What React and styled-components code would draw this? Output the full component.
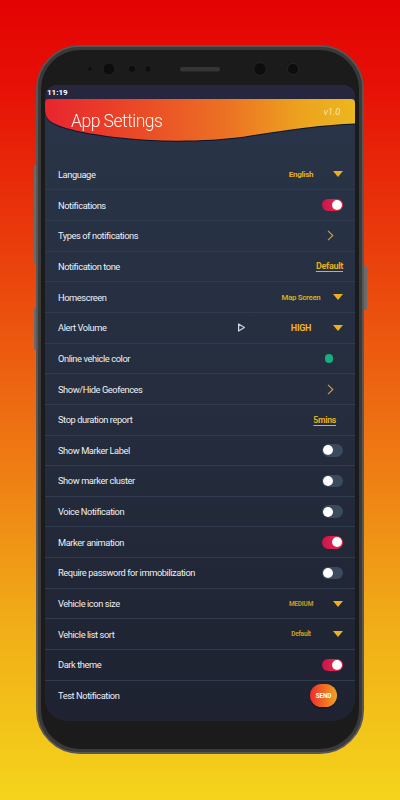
import React from "react";
import styled, { createGlobalStyle } from "styled-components";

const Global = createGlobalStyle`
  html, body { margin: 0; padding: 0; }
  body { font-family: Roboto, "Liberation Sans", sans-serif; }
  * { box-sizing: border-box; }
`;

const Page = styled.div`
  width: 400px;
  height: 800px;
  padding-top: 45px;
  display: flex;
  justify-content: center;
  background: linear-gradient(180deg, #e40303 0%, #e60f06 10%, #ed6411 48%, #f1ad18 78%, #f4d41b 100%);
`;

const Phone = styled.div`
  position: relative;
  width: 328px;
  height: 709px;
  border: 2px solid #575757;
  border-radius: 44px;
  background: #1b1b1b;
  box-shadow: inset 0 0 0 3px #3a3a3a;
  padding: 0 7px;
  display: flex;
  flex-direction: column;
`;

const SideButton = styled.div`
  position: absolute;
  width: 2.5px;
  top: ${(p) => p.$top}px;
  height: ${(p) => p.$h}px;
  ${(p) => (p.$right ? "right: -4.5px;" : "left: -4.5px;")}
  background: #6a6a6a;
  border-radius: 1px;
`;

const TopBezel = styled.div`
  height: 38px;
  flex-shrink: 0;
  display: flex;
  align-items: flex-start;
`;

const Screen = styled.div`
  height: 636px;
  flex-shrink: 0;
  border-radius: 12px 12px 22px 22px;
  overflow: hidden;
  background: linear-gradient(180deg, #293549 0%, #252d3e 50%, #1e2231 100%);
  display: flex;
  flex-direction: column;
`;

const StatusBar = styled.div`
  height: 14px;
  flex-shrink: 0;
  background: #27263f;
  color: #ffffff;
  font-weight: 700;
  font-size: 8px;
  padding-left: 2px;
  display: flex;
  align-items: center;
`;

const HeaderArea = styled.div`
  height: 59.6px;
  flex-shrink: 0;
  filter: drop-shadow(0 1.2px 0.4px rgba(6, 18, 48, 0.95));
`;

const Wave = styled.div`
  height: 44px;
  background: linear-gradient(90deg, #e8252d 0%, #ea4a27 30%, #ec7423 60%, #eca21f 82%, #ecb71e 100%);
  clip-path: path("M0,4 Q0,0 4,0 L306,0 Q310,0 310,4 L310,24.5 C280,25.5 240,31 200,37.5 C160,43 110,43 70,38 C35,33.5 10,28 3,20 Q0,16 0,10 Z");
  display: flex;
  justify-content: space-between;
  align-items: flex-start;
  padding: 0 15px 0 26px;
`;

const Title = styled.div`
  margin-top: 13.5px;
  font-family: Roboto, "Liberation Sans", sans-serif;
  font-weight: 300;
  font-size: 17.5px;
  line-height: 1;
  letter-spacing: -0.5px;
  color: #fff4ee;
`;

const Version = styled.div`
  margin-top: 8px;
  font-style: italic;
  font-size: 9.5px;
  line-height: 1;
  color: #f7e6a4;
  letter-spacing: -0.2px;
`;

const List = styled.div`
  display: flex;
  flex-direction: column;
`;

const Row = styled.div`
  height: 30.67px;
  display: flex;
  align-items: center;
  padding: 0 12px 0 13px;
  border-top: 1px solid ${(p) => (p.$first ? "transparent" : "#303b4e")};
`;

const Label = styled.div`
  flex: 1;
  font-size: 9.3px;
  font-weight: 400;
  letter-spacing: -0.42px;
  color: #eef0f3;
  white-space: nowrap;
`;

const ValueBox = styled.div`
  width: 50px;
  text-align: center;
  font-weight: 700;
  font-size: ${(p) => p.$size}px;
  letter-spacing: ${(p) => (p.$size < 7 ? -0.2 : -0.3)}px;
  color: ${(p) => p.$color};
`;

const Caret = styled.svg`
  margin-left: 7px;
  display: block;
`;

const PlayIcon = styled.svg`
  display: block;
  margin-right: 30px;
`;

const Chevron = styled.svg`
  display: block;
  margin-right: 9px;
`;

const Dot = styled.div`
  width: 8.5px;
  height: 8.5px;
  border-radius: 50%;
  background: #18ae7d;
  margin-right: 10px;
`;

const LinkValue = styled.div`
  font-weight: 700;
  font-size: ${(p) => p.$size}px;
  letter-spacing: -0.3px;
  color: #e7ae1d;
  text-decoration: underline;
  text-underline-offset: 1.5px;
  margin-right: ${(p) => p.$mr}px;
`;

const Track = styled.div`
  width: 21px;
  height: 12.5px;
  border-radius: 6.5px;
  padding: 1.2px;
  display: flex;
  justify-content: ${(p) => (p.$on ? "flex-end" : "flex-start")};
  align-items: center;
  background: ${(p) => (p.$on ? "linear-gradient(90deg, #c81550, #ef2c46)" : "#3c4a5d")};
`;

const Knob = styled.div`
  width: 10px;
  height: 10px;
  border-radius: 50%;
  background: #ffffff;
  box-shadow: 0 0 0.5px rgba(0, 0, 0, 0.4);
`;

const SendButton = styled.button`
  width: 27px;
  height: 23px;
  border: none;
  border-radius: 12px;
  padding: 0;
  margin-right: 6px;
  background: linear-gradient(90deg, #ee2a2b 0%, #f06a23 50%, #eea41f 100%);
  color: #ffffff;
  font-family: Roboto, "Liberation Sans", sans-serif;
  font-weight: 700;
  font-size: 6.3px;
  letter-spacing: -0.1px;
  box-shadow: 0 1px 2px rgba(0, 0, 0, 0.4);
`;

const Chin = styled.div`
  flex: 1;
`;

function Toggle({ on }) {
  return (
    <Track $on={on}>
      <Knob />
    </Track>
  );
}

function Dropdown({ value, size, color }) {
  return (
    <>
      <ValueBox $size={size} $color={color}>{value}</ValueBox>
      <Caret width="10" height="6" viewBox="0 0 10 6">
        <polygon points="0,0 10,0 5,6" fill="#ebb11b" />
      </Caret>
    </>
  );
}

function Arrow() {
  return (
    <Chevron width="7" height="11" viewBox="0 0 7 11">
      <polyline points="1,0.8 5.8,5.5 1,10.2" fill="none" stroke="#cfa23d" strokeWidth="1.1" />
    </Chevron>
  );
}

const rows = [
  { label: "Language", kind: "dd", value: "English", size: 8, color: "#e8ae1c" },
  { label: "Notifications", kind: "toggle", on: true },
  { label: "Types of notifications", kind: "chev" },
  { label: "Notification tone", kind: "link", value: "Default", size: 9, mr: 0 },
  { label: "Homescreen", kind: "dd", value: "Map Screen", size: 7.8, color: "#d9a41f" },
  { label: "Alert Volume", kind: "dd", play: true, value: "HIGH", size: 9, color: "#efb31d" },
  { label: "Online vehicle color", kind: "dot" },
  { label: "Show/Hide Geofences", kind: "chev" },
  { label: "Stop duration report", kind: "link", value: "5mins", size: 8.7, mr: 7 },
  { label: "Show Marker Label", kind: "toggle", on: false },
  { label: "Show marker cluster", kind: "toggle", on: false },
  { label: "Voice Notification", kind: "toggle", on: false },
  { label: "Marker animation", kind: "toggle", on: true },
  { label: "Require password for immobilization", kind: "toggle", on: false },
  { label: "Vehicle icon size", kind: "dd", value: "MEDIUM", size: 6.5, color: "#c9981e" },
  { label: "Vehicle list sort", kind: "dd", value: "Default", size: 6.5, color: "#cf9f1f" },
  { label: "Dark theme", kind: "toggle", on: true },
  { label: "Test Notification", kind: "send" },
];

function Control({ row }) {
  switch (row.kind) {
    case "dd":
      return (
        <>
          {row.play && (
            <PlayIcon width="9" height="9" viewBox="0 0 9 9">
              <path d="M1.6,1 L1.6,8 L7.4,4.5 Z" fill="none" stroke="#cfd3dc" strokeWidth="1.3" strokeLinejoin="round" />
            </PlayIcon>
          )}
          <Dropdown value={row.value} size={row.size} color={row.color} />
        </>
      );
    case "toggle":
      return <Toggle on={row.on} />;
    case "chev":
      return <Arrow />;
    case "link":
      return <LinkValue $size={row.size} $mr={row.mr}>{row.value}</LinkValue>;
    case "dot":
      return <Dot />;
    case "send":
      return <SendButton>SEND</SendButton>;
    default:
      return null;
  }
}

function Sensors() {
  return (
    <svg width="310" height="38" viewBox="0 0 310 38">
      <circle cx="45" cy="22" r="1.6" fill="#0c0c0c" />
      <circle cx="64" cy="22" r="6" fill="#0d0d0d" stroke="#262626" strokeWidth="0.8" />
      <circle cx="87" cy="22" r="3.6" fill="#0d0d0d" stroke="#262626" strokeWidth="0.6" />
      <circle cx="103" cy="22" r="2.4" fill="#0d0d0d" />
      <rect x="135" y="20" width="40" height="4.5" rx="2.25" fill="#353535" />
      <circle cx="215" cy="22" r="6.3" fill="#0d0d0d" stroke="#2a2a2a" strokeWidth="0.8" />
      <circle cx="248" cy="22" r="5.6" fill="#0d0d0d" stroke="#2a2a2a" strokeWidth="0.8" />
    </svg>
  );
}

export default function App() {
  return (
    <>
      <Global />
      <Page>
        <Phone>
          <SideButton $top={118} $h={98} />
          <SideButton $top={260} $h={43} />
          <SideButton $right $top={219} $h={44} />
          <TopBezel>
            <Sensors />
          </TopBezel>
          <Screen>
            <StatusBar>11:19</StatusBar>
            <HeaderArea>
              <Wave>
                <Title>App Settings</Title>
                <Version>v1.0</Version>
              </Wave>
            </HeaderArea>
            <List>
              {rows.map((row, i) => (
                <Row key={row.label} $first={i === 0}>
                  <Label>{row.label}</Label>
                  <Control row={row} />
                </Row>
              ))}
            </List>
          </Screen>
          <Chin />
        </Phone>
      </Page>
    </>
  );
}
